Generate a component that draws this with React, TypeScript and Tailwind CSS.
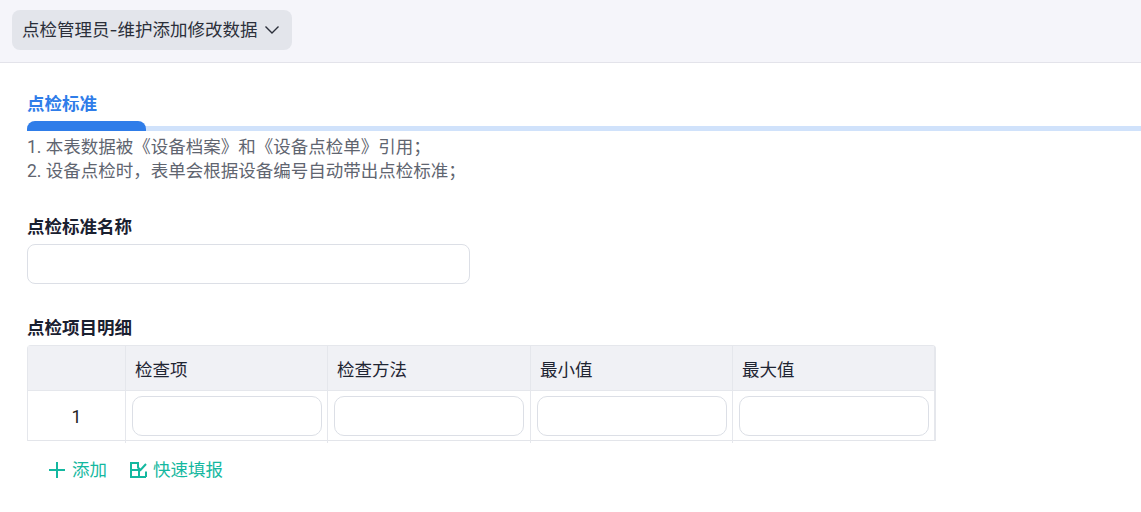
const font = { fontFamily: '"Inter", "Noto Sans CJK SC", sans-serif' };
const noteFont = { fontFamily: '"Roboto", "Noto Sans CJK SC", sans-serif' };

const columns = ["检查项", "检查方法", "最小值", "最大值"];

function ChevronIcon() {
  return (
    <svg width="16" height="10" viewBox="0 0 16 10" fill="none" stroke="currentColor" strokeWidth="1.4">
      <path d="M1.5 1.5L8 8L14.5 1.5" />
    </svg>
  );
}

function PlusIcon() {
  return (
    <svg width="16" height="16" viewBox="0 0 16 16" fill="none" stroke="currentColor" strokeWidth="2">
      <path d="M0 8H16M8 0V16" />
    </svg>
  );
}

function QuickFillIcon() {
  return (
    <svg width="17" height="16" viewBox="0 0 17 16" fill="none" stroke="currentColor" strokeWidth="2">
      <path d="M9 1H1V15H16" />
      <path d="M1 8H9V15" />
      <path d="M8 1V5.5L10.5 8L16 2" />
      <path d="M16 9.5V15" />
    </svg>
  );
}

export default function App() {
  return (
    <div className="w-[1141px] h-[512px] overflow-hidden bg-white text-[17.5px] text-[#1f2533]" style={font}>
      {/* Header */}
      <div className="h-[63px] bg-[#f5f5fa] border-b border-[#e3e3ea] pt-[10px] pl-[12px]">
        <button className="flex items-center w-[280px] h-[40px] pl-[10px] rounded-lg bg-[#e3e5eb] text-[#2b2f3a]">
          <span className="leading-[40px] whitespace-nowrap">点检管理员-维护添加修改数据</span>
          <span className="ml-[6px]">
            <ChevronIcon />
          </span>
        </button>
      </div>

      <div className="pl-[27px] pt-[27px]">
        {/* Section title */}
        <div className="text-[#2f7de9] font-bold leading-[28px] h-[31px]">点检标准</div>
        <div className="relative h-[10px] flex items-end">
          <div className="h-[5px] w-full bg-[#d0e2fb]" />
          <div className="absolute left-0 top-0 h-[10px] w-[119px] rounded-t-lg bg-[#2f7de9]" />
        </div>
        <div className="text-[#5f6570] leading-[24px] pt-[4px]" style={noteFont}>
          <div>1. 本表数据被《设备档案》和《设备点检单》引用；</div>
          <div>2. 设备点检时，表单会根据设备编号自动带出点检标准；</div>
        </div>

        {/* Name field */}
        <div className="mt-[31px] font-bold leading-[26px] text-[#1a2030]">点检标准名称</div>
        <input className="block mt-[4px] w-[443px] h-[40px] rounded-lg border border-[#dcdfe6] bg-white" />

        {/* Detail table */}
        <div className="mt-[31px] font-bold leading-[26px] text-[#1a2030]">点检项目明细</div>
        <div className="mt-[4px] w-[909px] rounded-t-sm border-l border-t border-r-2 border-[#e5e7ec]">
          <div className="grid grid-cols-[97px_202px_203px_202px_1fr] h-[45px] bg-[#f0f1f5] border-b border-[#e5e7ec]">
            <div />
            {columns.map((c) => (
              <div key={c} className="border-l border-[#e5e7ec] pl-[9px] leading-[48px]">
                {c}
              </div>
            ))}
          </div>
          <div className="grid grid-cols-[97px_202px_203px_202px_1fr] h-[50px] border-b border-[#e3e5ea]">
            <div className="text-center leading-[52px] text-[#222]" style={noteFont}>1</div>
            {columns.map((c) => (
              <div key={c} className="border-l border-[#e5e7ec] pl-[6px] pt-[5px]">
                <input className="block w-[190px] h-[40px] rounded-[10px] border border-[#dcdfe6] bg-white" />
              </div>
            ))}
          </div>
        </div>

        {/* Actions */}
        <div className="flex items-center mt-[16px] ml-[22px] text-[#14b8a0] leading-[26px]">
          <PlusIcon />
          <span className="ml-[7px]">添加</span>
          <span className="ml-[23px]">
            <QuickFillIcon />
          </span>
          <span className="ml-[6px]">快速填报</span>
        </div>
      </div>
    </div>
  );
}
